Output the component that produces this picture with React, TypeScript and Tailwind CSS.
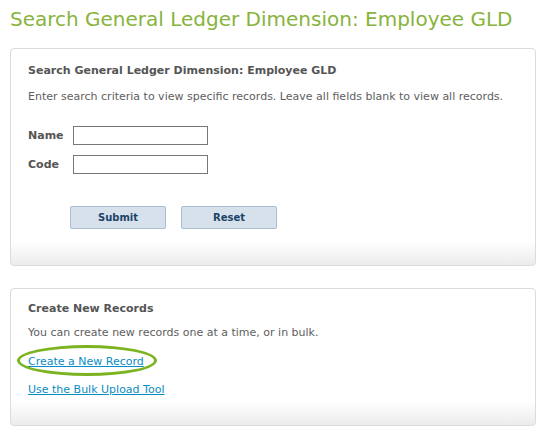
export default function App() {
  const panel =
    "mx-[10px] rounded-[4px] border border-[#dcdcdc] bg-[linear-gradient(to_bottom,#ffffff_calc(100%-24px),#ececec)] px-[17px] text-[11px] leading-[14px]";
  return (
    <div className="w-[546px] h-[434px] bg-white font-['DejaVu_Sans',Verdana,sans-serif] text-[#555] overflow-hidden">
      <h1 className="pl-[10px] pt-[5px] text-[20px] leading-[28px] text-[#88b33c]">
        Search General Ledger Dimension: Employee GLD
      </h1>
      <div className={panel + " mt-[15px] h-[218px] pt-[15px]"}>
        <div className="font-bold text-[#555]">Search General Ledger Dimension: Employee GLD</div>
        <div className="mt-[12px] text-[#5e5e5e]">
          Enter search criteria to view specific records. Leave all fields blank to view all records.
        </div>
        <div className="mt-[22px] grid grid-cols-[45px_135px] gap-y-[10px] items-center">
          <div className="font-bold text-[#555]">Name</div>
          <div className="h-[19px] border border-[#777] bg-white" />
          <div className="font-bold text-[#555]">Code</div>
          <div className="h-[19px] border border-[#777] bg-white" />
        </div>
        <div className="mt-[32px] ml-[42px] flex gap-[15px]">
          <button className="w-[96px] h-[23px] rounded-[2px] border border-[#a9bdd0] bg-[#d6e1eb] text-[10px] font-bold text-[#1b4468]">
            Submit
          </button>
          <button className="w-[96px] h-[23px] rounded-[2px] border border-[#a9bdd0] bg-[#d6e1eb] text-[10px] font-bold text-[#1b4468]">
            Reset
          </button>
        </div>
      </div>
      <div className={panel + " mt-[22px] h-[138px] pt-[13px]"}>
        <div className="font-bold text-[#555]">Create New Records</div>
        <div className="mt-[10px] text-[#5e5e5e]">You can create new records one at a time, or in bulk.</div>
        <div className="relative mt-[15px] h-[14px]">
          <a className="text-[#0a8cc4] underline">Create a New Record</a>
          <div className="absolute left-[-11px] top-[-10px] w-[140px] h-[31px] rounded-[50%] border-[3px] border-[#7cb320]" />
        </div>
        <div className="mt-[14px] h-[14px]">
          <a className="text-[#0a8cc4] underline">Use the Bulk Upload Tool</a>
        </div>
      </div>
    </div>
  );
}
